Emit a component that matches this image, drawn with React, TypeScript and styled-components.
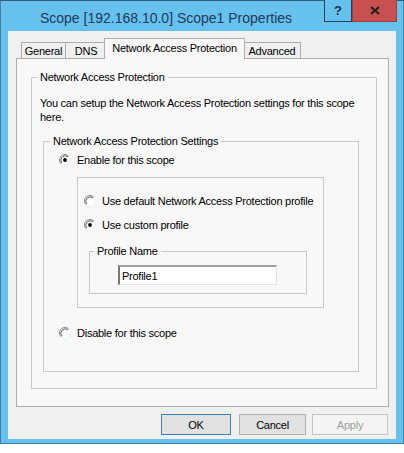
import React from 'react';
import styled, { createGlobalStyle } from 'styled-components';

const GlobalStyle = createGlobalStyle`
  body {
    margin: 0;
    background: #ffffff;
    font-family: "Liberation Sans", Arial, sans-serif;
  }
`;

const Window = styled.div`
  width: 404px;
  height: 444px;
  box-sizing: border-box;
  background: #66c1ec;
  border: 1px solid #3f7fa8;
  border-top-color: #2f5f80;
  padding: 0 7px 4px 7px;
  display: flex;
  flex-direction: column;
`;

const TitleBar = styled.div`
  height: 30px;
  display: flex;
  align-items: flex-start;
`;

const Title = styled.div`
  flex: 1;
  text-align: center;
  padding-top: 2px;
  line-height: 30px;
  font-size: 14px;
  color: #1e395b;
  white-space: nowrap;
`;

const CaptionButtons = styled.div`
  display: flex;
  margin-top: -1px;
  margin-right: -1px;
`;

const CaptionButton = styled.div<{ $width: number; $close?: boolean }>`
  width: ${p => p.$width}px;
  height: 22px;
  box-sizing: border-box;
  display: flex;
  align-items: center;
  justify-content: center;
  background: ${p => (p.$close ? '#c75050' : '#66c1ec')};
  border: 1px solid ${p => (p.$close ? '#a33b3b' : '#23405e')};
  border-top: none;
  color: #1b2f4a;
  font-weight: bold;
  font-size: 13px;
`;

const Client = styled.div`
  flex: 1;
  background: #f0f0f0;
  padding: 7px 7px 0 8px;
  display: flex;
  flex-direction: column;
`;

const TabStrip = styled.div`
  height: 20px;
  display: flex;
  align-items: flex-end;
  padding-left: 5px;
  position: relative;
  z-index: 1;
`;

const Tab = styled.div<{ $width: number; $active?: boolean; $offset: number }>`
  width: ${p => p.$width}px;
  height: ${p => (p.$active ? 21 : 16)}px;
  margin-left: ${p => p.$offset}px;
  margin-bottom: ${p => (p.$active ? -1 : 0)}px;
  box-sizing: border-box;
  border: 1px solid #adadad;
  border-bottom: none;
  background: ${p => (p.$active ? '#f8f8f8' : '#efefef')};
  position: relative;
  z-index: ${p => (p.$active ? 2 : 1)};
  display: flex;
  align-items: center;
  justify-content: center;
  padding-bottom: ${p => (p.$active ? 2 : 0)}px;
  font-size: 11px;
  letter-spacing: -0.25px;
  color: #000;
  white-space: nowrap;
`;

const Panel = styled.div`
  height: 349px;
  box-sizing: border-box;
  border: 1px solid #adadad;
  background: #f8f8f8;
  padding: 11px 0 0 14px;
`;

const Group = styled.fieldset<{ $width: number; $height: number }>`
  margin: 0;
  padding: 0;
  min-width: 0;
  box-sizing: border-box;
  width: ${p => p.$width}px;
  height: ${p => p.$height}px;
  border: 1px solid #c8c8c8;
`;

const Legend = styled.legend<{ $indent: number }>`
  margin-left: ${p => p.$indent}px;
  padding: 0 3px;
  line-height: 14px;
  font-size: 11px;
  letter-spacing: -0.25px;
  color: #000;
`;

const Description = styled.p`
  margin: 12px 0 0 8px;
  line-height: 14px;
  font-size: 11px;
  letter-spacing: -0.25px;
  color: #000;
  width: 330px;
`;

const Nested = styled.div<{ $top: number; $left: number }>`
  margin: ${p => p.$top}px 0 0 ${p => p.$left}px;
`;

const RadioRow = styled.label<{ $top: number; $left: number }>`
  display: flex;
  align-items: center;
  gap: 6px;
  height: 14px;
  margin: ${p => p.$top}px 0 0 ${p => p.$left}px;
  font-size: 11px;
  letter-spacing: -0.25px;
  color: #000;
  white-space: nowrap;
`;

const SubBox = styled.div`
  margin: 10px 0 0 33px;
  width: 247px;
  height: 131px;
  box-sizing: border-box;
  border: 1px solid #c8c8c8;
  padding: 16px 0 0 6px;
`;

const TextBox = styled.div`
  margin: 7px 0 0 28px;
  width: 159px;
  height: 20px;
  box-sizing: border-box;
  background: #ffffff;
  border-top: 2px solid #a0a0a0;
  border-left: 2px solid #7a7a7a;
  border-right: 1px solid #e3e3e3;
  border-bottom: 1px solid #e3e3e3;
  padding-left: 2px;
  display: flex;
  align-items: center;
  font-size: 11px;
  letter-spacing: -0.25px;
  color: #000;
`;

const ButtonRow = styled.div`
  display: flex;
  justify-content: flex-end;
  margin: 7px 1px 0 0;
`;

const Button = styled.div<{ $width: number; $gap: number; $default?: boolean; $disabled?: boolean }>`
  width: ${p => p.$width}px;
  height: 21px;
  margin-left: ${p => p.$gap}px;
  box-sizing: border-box;
  border: 1px solid ${p => (p.$default ? '#3c7fb1' : p.$disabled ? '#c4c4c4' : '#adadad')};
  background: ${p => (p.$disabled ? '#f4f4f4' : '#e1e1e1')};
  color: ${p => (p.$disabled ? '#a0a0a0' : '#000')};
  display: flex;
  align-items: center;
  justify-content: center;
  font-size: 11px;
  letter-spacing: -0.25px;
`;

const Radio = ({ checked }: { checked?: boolean }) => (
  <svg width="12" height="12" viewBox="0 0 12 12">
    <circle cx="6" cy="6" r="5.5" fill="#ffffff" />
    <path d="M2.1 9.9 A5.5 5.5 0 0 1 9.9 2.1" fill="none" stroke="#8a8a8a" strokeWidth="1" />
    <path d="M2.9 9.1 A4.4 4.4 0 0 1 9.1 2.9" fill="none" stroke="#505050" strokeWidth="0.9" />
    <path d="M9.9 2.1 A5.5 5.5 0 0 1 2.1 9.9" fill="none" stroke="#f2f2f2" strokeWidth="1" />
    {checked && <circle cx="6" cy="6" r="1.9" fill="#000000" />}
  </svg>
);

const tabs = [
  { label: 'General', width: 45, offset: 0 },
  { label: 'DNS', width: 42, offset: -1 },
  { label: 'Network Access Protection', width: 141, offset: -3, active: true },
  { label: 'Advanced', width: 58, offset: -2 },
];

export default function App() {
  return (
    <>
      <GlobalStyle />
      <Window>
        <TitleBar>
          <Title>Scope [192.168.10.0] Scope1 Properties</Title>
          <CaptionButtons>
            <CaptionButton $width={28}>?</CaptionButton>
            <CaptionButton $width={45} $close>
              <svg width="10" height="9" viewBox="0 0 10 9">
                <path d="M1 1 L9 8 M9 1 L1 8" stroke="#2a1c1c" strokeWidth="2.2" />
              </svg>
            </CaptionButton>
          </CaptionButtons>
        </TitleBar>
        <Client>
          <TabStrip>
            {tabs.map(t => (
              <Tab key={t.label} $width={t.width} $offset={t.offset} $active={t.active}>
                {t.label}
              </Tab>
            ))}
          </TabStrip>
          <Panel>
            <Group $width={346} $height={319}>
              <Legend $indent={5}>Network Access Protection</Legend>
              <Description>
                You can setup the Network Access Protection settings for this scope here.
              </Description>
              <Nested $top={10} $left={11}>
                <Group $width={316} $height={238}>
                  <Legend $indent={6}>Network Access Protection Settings</Legend>
                  <RadioRow $top={5} $left={15}>
                    <Radio checked />
                    Enable for this scope
                  </RadioRow>
                  <SubBox>
                    <RadioRow $top={0} $left={0}>
                      <Radio />
                      Use default Network Access Protection profile
                    </RadioRow>
                    <RadioRow $top={10} $left={0}>
                      <Radio checked />
                      Use custom profile
                    </RadioRow>
                    <Nested $top={12} $left={5}>
                      <Group $width={218} $height={50}>
                        <Legend $indent={4}>Profile Name</Legend>
                        <TextBox>Profile1</TextBox>
                      </Group>
                    </Nested>
                  </SubBox>
                  <RadioRow $top={18} $left={15}>
                    <Radio />
                    Disable for this scope
                  </RadioRow>
                </Group>
              </Nested>
            </Group>
          </Panel>
          <ButtonRow>
            <Button $width={70} $gap={0} $default>OK</Button>
            <Button $width={67} $gap={8}>Cancel</Button>
            <Button $width={76} $gap={6} $disabled>Apply</Button>
          </ButtonRow>
        </Client>
      </Window>
    </>
  );
}
